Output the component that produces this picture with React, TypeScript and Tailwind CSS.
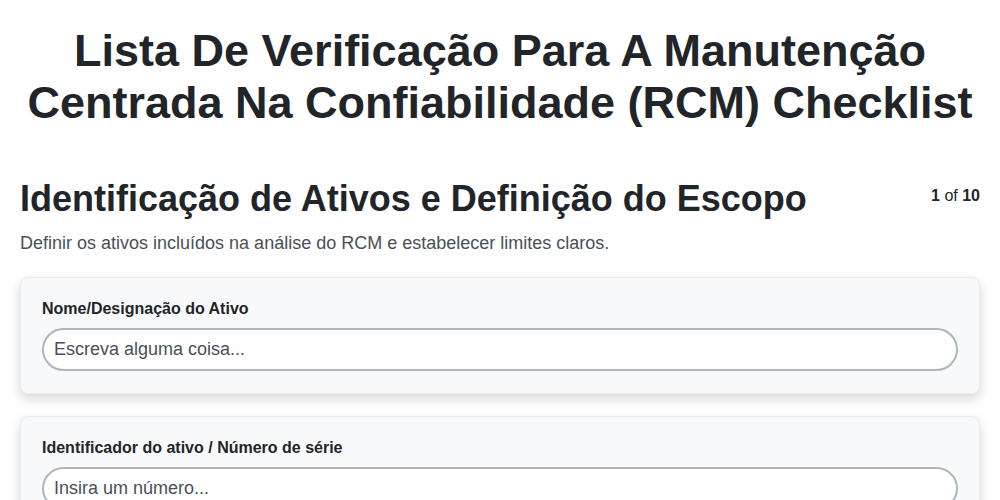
import { useState } from 'react'

const fields = [
  { label: 'Nome/Designação do Ativo', placeholder: 'Escreva alguma coisa...', type: 'text' },
  { label: 'Identificador do ativo / Número de série', placeholder: 'Insira um número...', type: 'text' },
  { label: 'Localização do ativo', placeholder: 'Escreva alguma coisa...', type: 'text' },
]

export default function App() {
  const [values, setValues] = useState<Record<number, string>>({})

  return (
    <div className="min-h-screen bg-white text-[#212529] font-['Liberation_Sans',Arial,sans-serif]">
      <div className="px-5 pt-[25px]">
        <h1 className="text-center font-bold text-[45px] leading-[52px]">
          Lista De Verificação Para A Manutenção Centrada Na Confiabilidade (RCM) Checklist
        </h1>

        <div className="mt-[48px] flex items-start justify-between">
          <h2 className="font-bold text-[36px] leading-[1.2]">
            Identificação de Ativos e Definição do Escopo
          </h2>
          <div className="pt-[7px] text-[16px] text-[#212529]">
            <span className="font-bold">1</span> of <span className="font-bold">10</span>
          </div>
        </div>
        <p className="mt-[10px] text-[18px] leading-[27px] text-[#495057]">
          Definir os ativos incluídos na análise do RCM e estabelecer limites claros.
        </p>

        <div className="mt-[20px] flex flex-col gap-[22px]">
          {fields.map((f, i) => (
            <div
              key={i}
              className="rounded-lg border border-[#e9ecef] bg-[#f8f9fa] px-[21px] pt-[20px] pb-[22px] shadow-[0_5px_12px_rgba(0,0,0,0.16)]"
            >
              <label className="block text-[16px] font-bold leading-[21px] mb-[9px]">{f.label}</label>
              <input
                type={f.type}
                value={values[i] ?? ''}
                onChange={e => setValues({ ...values, [i]: e.target.value })}
                placeholder={f.placeholder}
                className="w-full h-[43px] rounded-full border-2 border-[#adb5bd] bg-white px-[10px] text-[18px] text-[#212529] placeholder:text-[#495057] outline-none"
              />
            </div>
          ))}
        </div>
      </div>
    </div>
  )
}
